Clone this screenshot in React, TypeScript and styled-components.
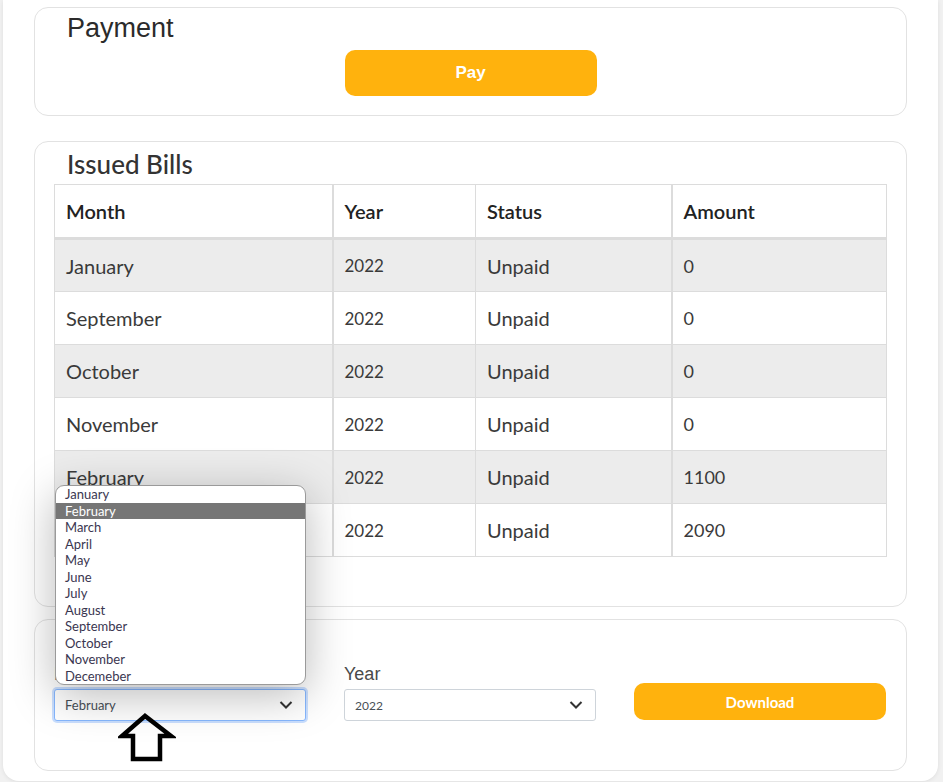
import React from "react";
import styled, { createGlobalStyle } from "styled-components";

const GlobalStyle = createGlobalStyle`
  html, body { margin: 0; padding: 0; background: #f1f1f1; }
  body { font-family: "Lato", "Open Sans", sans-serif; overflow: hidden; }
  * { box-sizing: border-box; }
`;

const Page = styled.div`
  width: 943px;
  height: 782px;
  padding: 0 7px 1px 3px;
  display: flex;
`;

const Sheet = styled.div`
  flex: 1;
  background: #ffffff;
  border-radius: 0 0 16px 16px;
  box-shadow: 0 1px 4px rgba(0, 0, 0, 0.08);
  padding: 7px 31px 10px 31px;
  display: flex;
  flex-direction: column;
`;

const Card = styled.section<{ $mt?: number; $pb: number }>`
  border: 1px solid #e2e2e2;
  border-radius: 14px;
  background: #fff;
  padding: 0 19px ${(p) => p.$pb}px 19px;
  margin-top: ${(p) => p.$mt ?? 0}px;
  display: flex;
  flex-direction: column;
`;

const PayHeading = styled.h2`
  margin: 0;
  padding: 3px 0 0 13px;
  font-family: "Liberation Sans", Arial, sans-serif;
  font-weight: 400;
  font-size: 27px;
  line-height: 34px;
  color: #2b2b2b;
`;

const Heading = styled.h2`
  margin: 0;
  padding: 3px 0 0 13px;
  font-family: "Lato", sans-serif;
  font-weight: 500;
  font-size: 26px;
  line-height: 39px;
  color: #333;
`;

const PayButton = styled.button`
  align-self: center;
  margin-top: 5px;
  width: 252px;
  height: 46px;
  border: none;
  border-radius: 10px;
  background: #ffb20d;
  color: #fff;
  font-family: "Liberation Sans", Arial, sans-serif;
  font-weight: 700;
  font-size: 17px;
`;

const Table = styled.table`
  border-collapse: collapse;
  width: 832px;
  table-layout: fixed;
  font-family: "Lato", sans-serif;
`;

const Th = styled.th<{ $thick?: boolean }>`
  text-align: left;
  height: 54px;
  padding: 0 11px;
  font-weight: 600;
  font-size: 20px;
  color: #222;
  border: 1px solid #dcdcdc;
  border-left-width: ${(p) => (p.$thick ? 2 : 1)}px;
  border-bottom: 3px solid #dcdcdc;
`;

const Tr = styled.tr<{ $odd: boolean }>`
  background: ${(p) => (p.$odd ? "#ececec" : "#ffffff")};
`;

const Td = styled.td<{ $size: number; $thick?: boolean }>`
  height: 53px;
  padding: 0 11px;
  font-size: ${(p) => p.$size}px;
  font-weight: 400;
  color: #3a3a3a;
  border: 1px solid #dcdcdc;
  border-left-width: ${(p) => (p.$thick ? 2 : 1)}px;
`;

const FormRow = styled.div`
  display: grid;
  grid-template-columns: 252px 252px 252px;
  column-gap: 38px;
  align-items: end;
  margin-top: 43px;
`;

const Field = styled.div`
  position: relative;
  display: flex;
  flex-direction: column;
`;

const Label = styled.label`
  font-family: "Liberation Sans", Arial, sans-serif;
  font-size: 18px;
  line-height: 22px;
  color: #4a4a4a;
  margin-bottom: 4px;
`;

const SelectBox = styled.div<{ $focus?: boolean }>`
  height: 32px;
  display: flex;
  align-items: center;
  justify-content: space-between;
  padding: 0 12px 0 10px;
  border: 1px solid ${(p) => (p.$focus ? "#86b7fe" : "#ced4da")};
  border-radius: 3px;
  box-shadow: ${(p) => (p.$focus ? "0 0 0 2px rgba(13,110,253,0.22)" : "none")};
  background: #fff;
  font-family: "Lato", sans-serif;
  color: #495057;
`;

const SelectText = styled.span<{ $size: number }>`
  font-size: ${(p) => p.$size}px;
`;

const DownloadButton = styled.button`
  height: 37px;
  margin-bottom: 1px;
  border: none;
  border-radius: 10px;
  background: #ffb20d;
  color: #fff;
  font-family: "Lato", sans-serif;
  font-weight: 700;
  font-size: 15px;
`;

const Dropdown = styled.ul`
  position: absolute;
  left: 1px;
  bottom: 36px;
  width: 251px;
  margin: 0;
  padding: 0;
  list-style: none;
  background: #fff;
  border: 1px solid #9a9a9a;
  border-radius: 9px;
  overflow: hidden;
  box-shadow: 0 10px 45px rgba(0, 0, 0, 0.28);
  z-index: 5;
`;

const Option = styled.li<{ $active?: boolean }>`
  height: 16.5px;
  line-height: 16.5px;
  padding-left: 9px;
  font-family: "Lato", sans-serif;
  font-size: 13px;
  color: ${(p) => (p.$active ? "#ffffff" : "#3a3650")};
  background: ${(p) => (p.$active ? "#767676" : "transparent")};
`;

const Pointer = styled.svg`
  position: absolute;
  left: 64px;
  top: 100%;
  margin-top: -8px;
  z-index: 6;
`;

const Chevron = () => (
  <svg width="14" height="10" viewBox="0 0 14 10">
    <path d="M1.5 2 L7 7.5 L12.5 2" fill="none" stroke="#333" strokeWidth="2" />
  </svg>
);

const bills = [
  { month: "January", year: "2022", status: "Unpaid", amount: "0" },
  { month: "September", year: "2022", status: "Unpaid", amount: "0" },
  { month: "October", year: "2022", status: "Unpaid", amount: "0" },
  { month: "November", year: "2022", status: "Unpaid", amount: "0" },
  { month: "February", year: "2022", status: "Unpaid", amount: "1100" },
  { month: "March", year: "2022", status: "Unpaid", amount: "2090" },
];

const months = [
  "January", "February", "March", "April", "May", "June", "July",
  "August", "September", "October", "November", "Decemeber",
];

export default function App() {
  return (
    <>
      <GlobalStyle />
      <Page>
        <Sheet>
          <Card $pb={19}>
            <PayHeading>Payment</PayHeading>
            <PayButton>Pay</PayButton>
          </Card>

          <Card $mt={25} $pb={49}>
            <Heading>Issued Bills</Heading>
            <Table>
              <colgroup>
                <col style={{ width: 278 }} />
                <col style={{ width: 143 }} />
                <col style={{ width: 196 }} />
                <col style={{ width: 215 }} />
              </colgroup>
              <thead>
                <tr>
                  <Th>Month</Th>
                  <Th $thick>Year</Th>
                  <Th>Status</Th>
                  <Th $thick>Amount</Th>
                </tr>
              </thead>
              <tbody>
                {bills.map((b, i) => (
                  <Tr key={i} $odd={i % 2 === 0}>
                    <Td $size={20}>{b.month}</Td>
                    <Td $size={17} $thick>{b.year}</Td>
                    <Td $size={20}>{b.status}</Td>
                    <Td $size={18} $thick>{b.amount}</Td>
                  </Tr>
                ))}
              </tbody>
            </Table>
          </Card>

          <Card $mt={12} $pb={49}>
            <FormRow>
              <Field>
                <Label>Month</Label>
                <SelectBox $focus>
                  <SelectText $size={13}>February</SelectText>
                  <Chevron />
                </SelectBox>
                <Dropdown>
                  {months.map((m) => (
                    <Option key={m} $active={m === "February"}>{m}</Option>
                  ))}
                </Dropdown>
                <Pointer width="58" height="50" viewBox="0 0 58 50">
                  <polygon
                    points="27,3 4,23 15,23 15,46 42,46 42,23 53,23"
                    fill="none"
                    stroke="#000"
                    strokeWidth="4.5"
                    strokeLinejoin="miter"
                  />
                </Pointer>
              </Field>
              <Field>
                <Label>Year</Label>
                <SelectBox>
                  <SelectText $size={12}>2022</SelectText>
                  <Chevron />
                </SelectBox>
              </Field>
              <DownloadButton>Download</DownloadButton>
            </FormRow>
          </Card>
        </Sheet>
      </Page>
    </>
  );
}
